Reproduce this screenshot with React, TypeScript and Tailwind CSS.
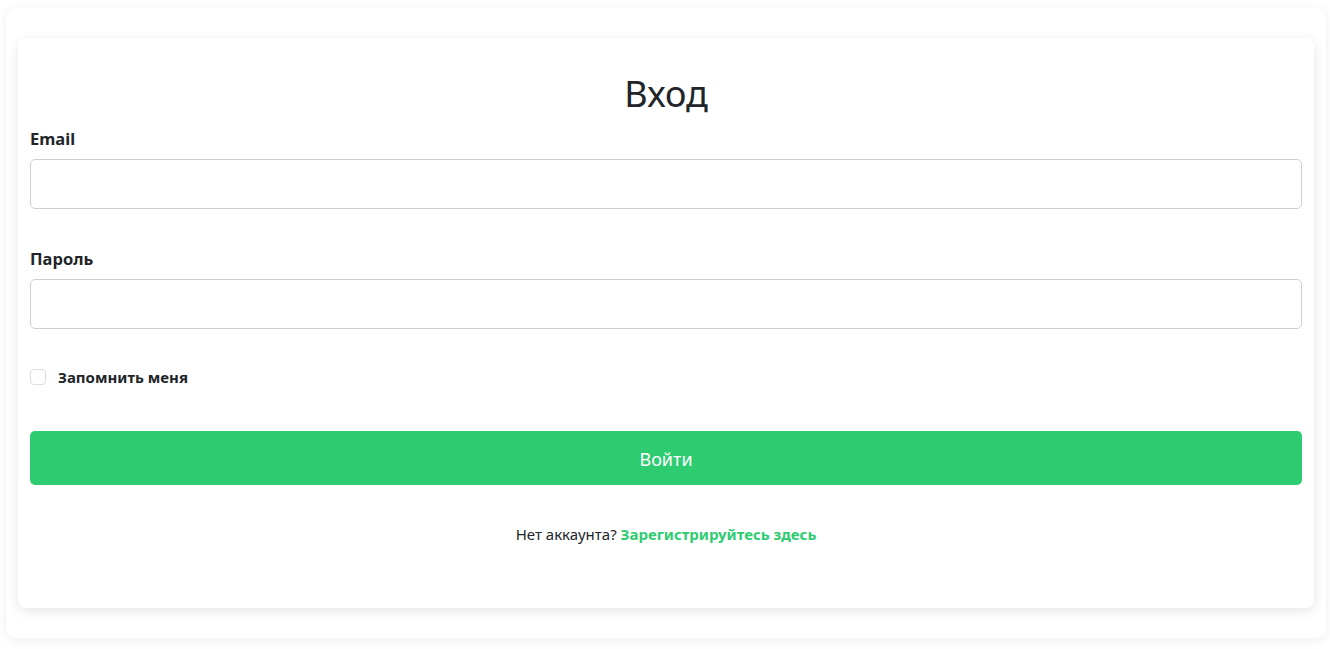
import React from "react";

export default function App() {
  return (
    <div
      className="min-h-[649px] bg-white pt-2 pl-[6px] pr-[4px] pb-[11px]"
      style={{ fontFamily: '"Noto Sans", "Open Sans", Arial, sans-serif' }}
    >
      <div className="rounded-[10px] bg-white px-3 py-[30px] shadow-[0_2px_12px_rgba(0,0,0,0.07)]">
        <div className="rounded-[8px] bg-white px-3 pt-[36px] pb-[64px] shadow-[0_3px_12px_rgba(0,0,0,0.1)]">
          <h2 className="text-center text-[36px] leading-[40px] font-normal text-[#212529]">Вход</h2>
          <div className="mt-[13px]">
            <label className="mb-2 block text-[16.5px] leading-[24px] font-bold text-[#212529]">Email</label>
            <input
              type="email"
              className="block h-[50px] w-full rounded-[5px] border border-[#cfcfcf] bg-white px-3 outline-none"
            />
          </div>
          <div className="mt-[38px]">
            <label className="mb-2 block text-[16.5px] leading-[24px] font-bold text-[#212529]">Пароль</label>
            <input
              type="password"
              className="block h-[50px] w-full rounded-[5px] border border-[#cfcfcf] bg-white px-3 outline-none"
            />
          </div>
          <div className="mt-[38px] flex items-center">
            <span className="block h-4 w-4 rounded-[4px] border border-[#dcdcdc] bg-white" />
            <span className="ml-3 text-[15px] leading-[20px] font-bold text-[#212529]">Запомнить меня</span>
          </div>
          <button className="mt-[44px] flex h-[54px] w-full items-center justify-center rounded-[5px] bg-[#2ecc71] pt-[2px] text-[18px] text-white">
            Войти
          </button>
          <p className="mt-[39px] text-center text-[15px] leading-[20px] text-[#212529]">
            Нет аккаунта? <span className="font-bold text-[#2ecc71]">Зарегистрируйтесь здесь</span>
          </p>
        </div>
      </div>
    </div>
  );
}
